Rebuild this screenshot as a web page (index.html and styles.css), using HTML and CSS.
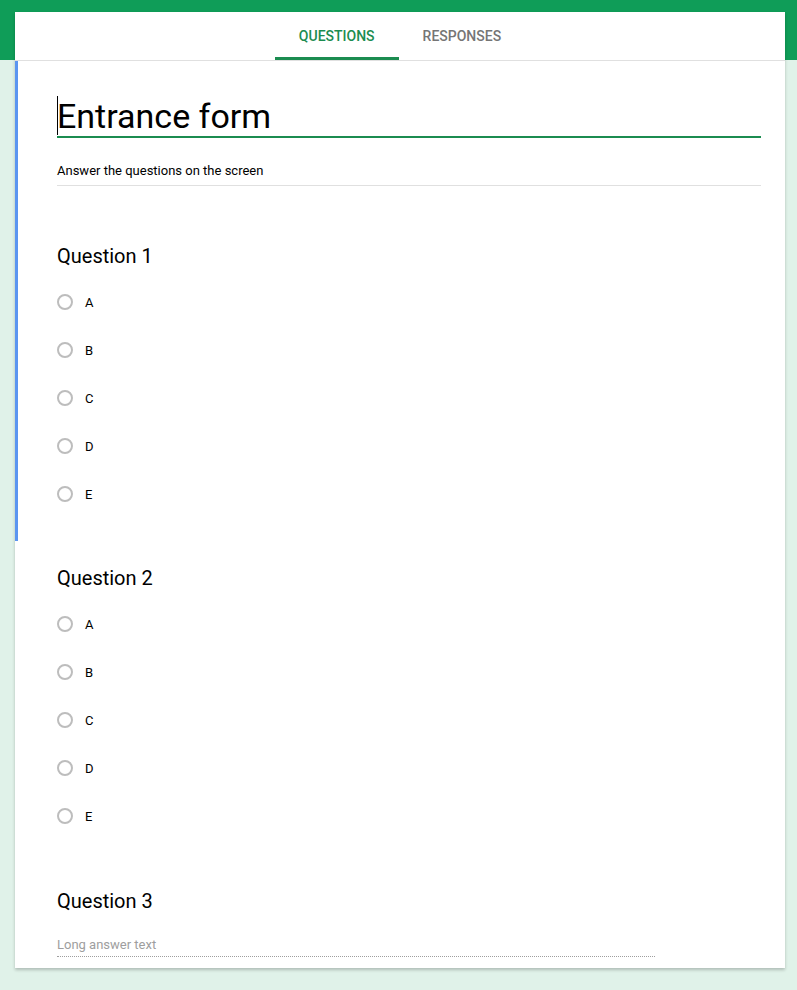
FILE: index.html
```html
<!DOCTYPE html>
<html>
<head>
<meta charset="utf-8">
<link rel="stylesheet" href="styles.css">
</head>
<body>
<div class="card">
  <div class="tabs">
    <div class="tab active">QUESTIONS</div>
    <div class="tab">RESPONSES</div>
  </div>
  <div class="section selected">
    <div class="form-title"><span class="caret"></span>Entrance form</div>
    <div class="form-desc">Answer the questions on the screen</div>
    <div class="q-title">Question 1</div>
    <div class="options">
      <div class="opt"><span class="radio"></span><span class="lbl">A</span></div>
      <div class="opt"><span class="radio"></span><span class="lbl">B</span></div>
      <div class="opt"><span class="radio"></span><span class="lbl">C</span></div>
      <div class="opt"><span class="radio"></span><span class="lbl">D</span></div>
      <div class="opt"><span class="radio"></span><span class="lbl">E</span></div>
    </div>
  </div>
  <div class="section">
    <div class="q-title">Question 2</div>
    <div class="options">
      <div class="opt"><span class="radio"></span><span class="lbl">A</span></div>
      <div class="opt"><span class="radio"></span><span class="lbl">B</span></div>
      <div class="opt"><span class="radio"></span><span class="lbl">C</span></div>
      <div class="opt"><span class="radio"></span><span class="lbl">D</span></div>
      <div class="opt"><span class="radio"></span><span class="lbl">E</span></div>
    </div>
  </div>
  <div class="section last">
    <div class="q-title">Question 3</div>
    <div class="long-answer">Long answer text</div>
  </div>
</div>
</body>
</html>
```
FILE: styles.css
```css
html, body {
  margin: 0;
  padding: 0;
}
body {
  background: linear-gradient(#0f9d58 0, #0f9d58 60px, #e0f2e9 60px) no-repeat, #e0f2e9;
  min-height: 990px;
  font-family: Roboto, "Noto Sans", sans-serif;
  color: #000;
  padding-top: 12px;
  box-sizing: border-box;
}
.card {
  margin-left: 15px;
  width: 770px;
  background: #fff;
  box-shadow: 0 2px 3px rgba(0,0,0,0.22);
}
.tabs {
  height: 48px;
  border-bottom: 1px solid #e0e0e0;
  display: flex;
  justify-content: center;
}
.tab {
  padding: 0 24px;
  font-size: 14px;
  font-weight: 500;
  color: #757575;
  line-height: 48px;
  box-sizing: border-box;
  height: 48px;
}
.tab.active {
  color: #1b8c50;
  border-bottom: 3px solid #1b8c50;
}
.section {
  padding: 25px 24px 23px 42px;
}
.section.selected {
  border-left: 3px solid #5b95f0;
  padding-left: 39px;
  padding-top: 35px;
}
.form-title {
  position: relative;
  font-size: 34px;
  line-height: 40px;
  border-bottom: 2px solid #1b8c50;
}
.caret {
  position: absolute;
  left: 0;
  top: 0;
  width: 1px;
  height: 39px;
  background: #000;
}
.form-desc {
  margin-top: 23px;
  font-size: 13px;
  line-height: 20px;
  padding-bottom: 4px;
  border-bottom: 1px solid #e0e0e0;
  margin-bottom: 58px;
}
.q-title {
  font-size: 20px;
  line-height: 24px;
}
.options {
  margin-top: 10px;
  display: flex;
  flex-direction: column;
}
.opt {
  height: 48px;
  display: flex;
  align-items: center;
}
.radio {
  width: 16px;
  height: 16px;
  border: 2px solid #bdbdbd;
  border-radius: 50%;
  box-sizing: border-box;
}
.lbl {
  margin-left: 12px;
  font-size: 13px;
}
.section.last {
  padding-top: 26px;
  padding-bottom: 11px;
}
.long-answer {
  margin-top: 22px;
  width: 598px;
  font-size: 13px;
  line-height: 20px;
  color: #9e9e9e;
  padding-bottom: 1px;
  border-bottom: 1px dotted #9e9e9e;
}
```
